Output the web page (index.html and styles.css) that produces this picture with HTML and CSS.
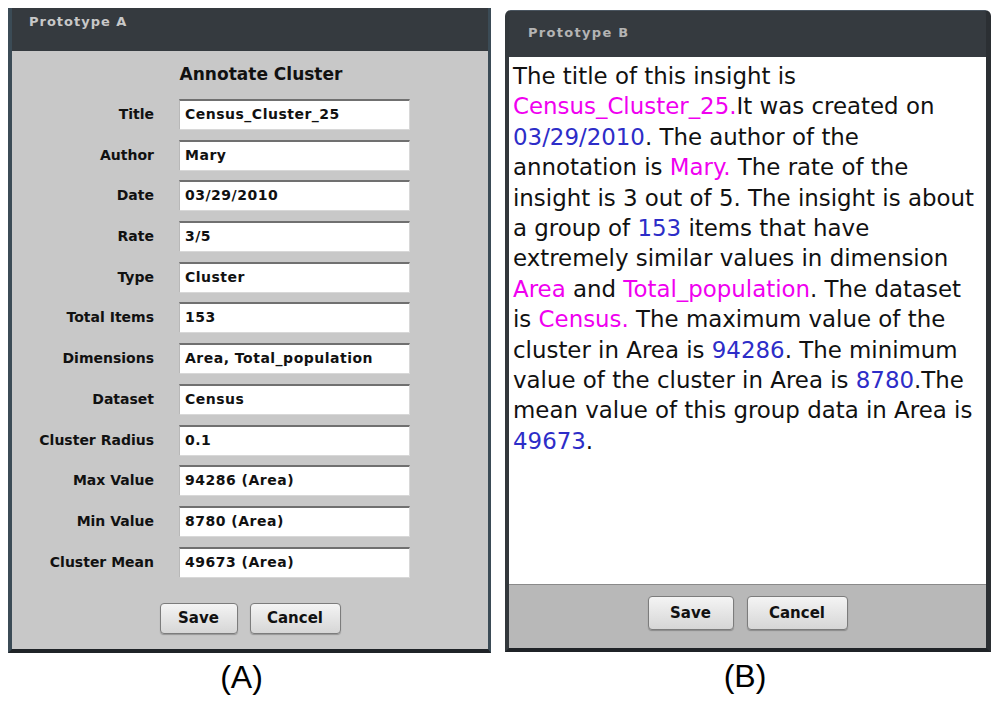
FILE: index.html
```html
<!DOCTYPE html>
<html>
<head>
<meta charset="utf-8">
<link rel="stylesheet" href="styles.css">
</head>
<body>
<div class="page">
  <div class="col col-a">
    <div class="panel panel-a">
      <div class="head head-a">Prototype A</div>
      <div class="body-a">
        <div class="form-title">Annotate Cluster</div>
        <div class="form">
          <div class="lbl">Title</div><div class="fld">Census_Cluster_25</div>
          <div class="lbl">Author</div><div class="fld">Mary</div>
          <div class="lbl">Date</div><div class="fld">03/29/2010</div>
          <div class="lbl">Rate</div><div class="fld">3/5</div>
          <div class="lbl">Type</div><div class="fld">Cluster</div>
          <div class="lbl">Total Items</div><div class="fld">153</div>
          <div class="lbl">Dimensions</div><div class="fld">Area, Total_population</div>
          <div class="lbl">Dataset</div><div class="fld">Census</div>
          <div class="lbl">Cluster Radius</div><div class="fld">0.1</div>
          <div class="lbl">Max Value</div><div class="fld">94286 (Area)</div>
          <div class="lbl">Min Value</div><div class="fld">8780 (Area)</div>
          <div class="lbl">Cluster Mean</div><div class="fld">49673 (Area)</div>
        </div>
        <div class="btns btns-a">
          <div class="btn btn-save-a">Save</div>
          <div class="btn btn-cancel-a">Cancel</div>
        </div>
      </div>
    </div>
    <div class="caption caption-a">(A)</div>
  </div>
  <div class="col col-b">
    <div class="panel panel-b">
      <div class="head head-b">Prototype B</div>
      <div class="text-b">The title of this insight is<br><span class="m">Census_Cluster_25.</span>It was created on<br><span class="b">03/29/2010</span>. The author of the<br>annotation is <span class="m">Mary.</span> The rate of the<br>insight is 3 out of 5. The insight is about<br>a group of <span class="b">153</span> items that have<br>extremely similar values in dimension<br><span class="m">Area</span> and <span class="m">Total_population</span>. The dataset<br>is <span class="m">Census.</span> The maximum value of the<br>cluster in Area is <span class="b">94286</span>. The minimum<br>value of the cluster in Area is <span class="b">8780</span>.The<br>mean value of this group data in Area is<br><span class="b">49673</span>.</div>
      <div class="foot-b">
        <div class="btn btn-save-b">Save</div>
        <div class="btn btn-cancel-b">Cancel</div>
      </div>
    </div>
    <div class="caption caption-b">(B)</div>
  </div>
</div>
</body>
</html>
```
FILE: styles.css
```css
html, body {
  margin: 0;
  padding: 0;
  background: #ffffff;
}
.page {
  display: flex;
  align-items: flex-start;
  width: 996px;
  height: 702px;
}
.col {
  display: flex;
  flex-direction: column;
  align-items: center;
}
.col-a {
  margin-left: 8px;
  margin-top: 8px;
}
.col-b {
  margin-left: 14px;
  margin-top: 10px;
}
.panel {
  box-sizing: border-box;
  display: flex;
  flex-direction: column;
}
.panel-a {
  width: 483px;
  height: 645px;
  background: #353a3f;
  border-left: 4px solid #3b4b56;
  border-right: 3px solid #3b4b56;
  border-bottom: 4px solid #1f2327;
}
.head {
  font-family: "DejaVu Sans", Verdana, sans-serif;
  font-weight: bold;
  font-size: 13px;
  letter-spacing: 1px;
  color: #c8c8c8;
  background: #353a3f;
}
.head-a {
  height: 43px;
  padding-left: 17px;
  padding-top: 6px;
  box-sizing: border-box;
}
.body-a {
  flex: 1;
  background: #c8c8c8;
  display: flex;
  flex-direction: column;
}
.form-title {
  font-family: "DejaVu Sans", Verdana, sans-serif;
  font-weight: bold;
  font-size: 17px;
  color: #111;
  text-align: center;
  margin-top: 13px;
  margin-left: 22px;
  height: 35px;
}
.form {
  display: grid;
  grid-template-columns: 142px 231px;
  column-gap: 25px;
  row-gap: 9.7px;
  grid-auto-rows: 31px;
}
.lbl {
  font-family: "DejaVu Sans", Verdana, sans-serif;
  font-weight: bold;
  font-size: 14px;
  color: #111;
  text-align: right;
  line-height: 31px;
}
.fld {
  box-sizing: border-box;
  background: #ffffff;
  border: 1px solid #d8d8d8;
  border-top: 2px solid #707070;
  border-left-color: #b8b8b8;
  font-family: "DejaVu Sans", Verdana, sans-serif;
  font-weight: bold;
  font-size: 14px;
  letter-spacing: 0.5px;
  color: #111;
  padding-left: 5px;
  line-height: 26px;
  white-space: nowrap;
}
.btns {
  display: flex;
  justify-content: center;
}
.btns-a {
  margin-top: 25px;
  gap: 12px;
}
.btn {
  box-sizing: border-box;
  height: 31px;
  border: 1px solid #7c7c7c;
  border-radius: 4px;
  background: linear-gradient(#f4f4f4, #d6d6d6);
  box-shadow: 0 1px 1px rgba(0,0,0,0.25);
  font-family: "DejaVu Sans", Verdana, sans-serif;
  font-weight: bold;
  font-size: 15px;
  color: #111;
  display: flex;
  align-items: center;
  justify-content: center;
}
.btn-save-a { width: 78px; }
.btn-cancel-a { width: 91px; }
.panel-b {
  width: 486px;
  height: 642px;
  background: #353a3f;
  border-radius: 6px 6px 0 0;
  border-left: 4px solid #33383c;
  border-right: 5px solid #2b2f33;
  border-bottom: 4px solid #1f2327;
  border-top: 1px solid #4a5560;
}
.head-b {
  height: 46px;
  padding-left: 19px;
  padding-top: 14px;
  box-sizing: border-box;
  color: #b4b4b4;
  letter-spacing: 1.3px;
  border-radius: 6px 6px 0 0;
}
.text-b {
  height: 528px;
  box-sizing: border-box;
  background: #ffffff;
  padding: 4px 0 0 4px;
  font-family: "DejaVu Sans", Verdana, sans-serif;
  font-size: 22.9px;
  line-height: 30.4px;
  color: #111;
  white-space: nowrap;
  overflow: hidden;
  border-bottom: 1px solid #8a8a8a;
}
.m { color: #f000f0; }
.b { color: #2d2dc8; }
.foot-b {
  flex: 1;
  background: #b8b8b8;
  display: flex;
  justify-content: center;
  align-items: flex-start;
  padding-top: 11px;
  gap: 13px;
}
.btn-save-b { width: 86px; height: 34px; }
.btn-cancel-b { width: 101px; height: 34px; }
.caption {
  font-family: "Liberation Sans", Arial, sans-serif;
  font-size: 32px;
  color: #000;
  margin-top: 6px;
  line-height: 36px;
}
.caption-a {
  margin-right: 16px;
}
.caption-b {
  margin-right: 6px;
}
```
